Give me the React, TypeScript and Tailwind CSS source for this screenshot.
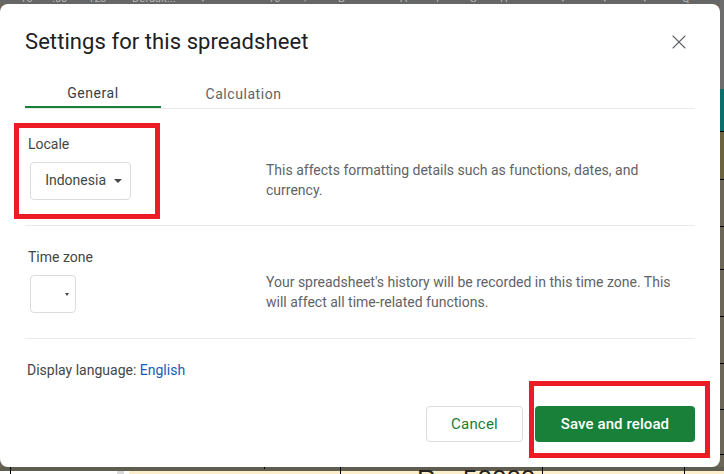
import { X } from "lucide-react";

const toolbarItems = [
  ["15", "w-[32px]"],
  [".00", "w-[36px]"],
  ["123", "w-[44px]"],
  ["Default...", "w-[68px]"],
  ["▾", "w-[37px]"],
  ["—", "w-[31px]"],
  ["10", "w-[34px]"],
  ["+", "w-[36px]"],
  ["B", "w-[62px]"],
  ["A", "w-[36px]"],
  ["I", "w-[34px]"],
  ["S", "w-[30px]"],
  ["H", "w-[60px]"],
  ["▾", "w-[42px]"],
  ["▾", "w-[40px]"],
  ["▾", "w-[40px]"],
  ["Q", "w-[20px]"],
];

function RightStrip() {
  return (
    <div className="absolute bottom-0 right-0 top-0 flex w-[4px] flex-col bg-[#6b6657]">
      <div className="h-[89px] bg-[#6d6d6d]" />
      <div className="h-[43px] border-b border-black bg-[#0d6f6c]" />
      <div className="h-[48px] border-b border-black bg-[#6b6240]" />
      <div className="h-[47px] border-b border-black" />
      <div className="h-[43px] border-b border-black" />
      <div className="h-[47px] border-b border-black" />
      <div className="h-[47px] border-b border-black" />
      <div className="h-[46px] border-b border-black" />
      <div className="h-[45px] border-b border-black" />
    </div>
  );
}

function BottomStrip() {
  return (
    <div className="absolute bottom-0 left-0 h-[7px] w-[724px] overflow-hidden bg-[#5f5c50]">
      <div className="absolute bottom-0 left-0 flex h-[3px] w-full">
        <div className="w-[117px] bg-white" />
        <div className="w-[7px] bg-[#d9d9d9]" />
        <div className="w-[5px] bg-white" />
        <div className="flex-1 bg-[#fdeecb]" />
      </div>
      <div className="absolute left-[10px] top-0 h-full w-px bg-black" />
      <div className="absolute left-[264px] top-0 h-[2px] w-px bg-black" />
      <div className="absolute left-[340px] top-0 h-full w-px bg-black" />
      <div className="absolute left-[542px] top-0 h-full w-px bg-black" />
      <div className="absolute left-[684px] top-0 h-full w-px bg-black" />
      <span className="absolute left-[417px] top-[-1px] font-['Liberation_Sans',sans-serif] text-[26px] leading-none text-[#222]">R</span>
      <span className="absolute left-[463px] top-[-1px] font-['Liberation_Sans',sans-serif] text-[26px] leading-none text-[#222]">50000</span>
    </div>
  );
}

function Toolbar() {
  return (
    <div className="flex h-[4px] items-end overflow-hidden bg-[#666666] pl-[20px] text-[11px] leading-none text-[#b5b5b5]">
      {toolbarItems.map(([text, width], i) => (
        <span key={i} className={`shrink-0 ${width}`}>{text}</span>
      ))}
    </div>
  );
}

function Divider() {
  return <div className="h-px bg-[#e8eaed]" />;
}

export default function App() {
  return (
    <div className="relative h-[474px] w-[724px] overflow-hidden bg-[#6b6657] font-['Roboto',sans-serif]">
      <RightStrip />
      <BottomStrip />
      <Toolbar />
      <div className="relative flex h-[463px] w-[720px] flex-col rounded-lg bg-white pl-[25px] pr-[25px]">
        <div className="flex h-[76px] shrink-0 items-center justify-between pr-[4px]">
          <h1 className="text-[22px] leading-7 tracking-[.07px] text-[#202124]">Settings for this spreadsheet</h1>
          <X className="h-6 w-6 text-[#5f6368]" strokeWidth={1.1} />
        </div>
        <div className="flex h-[29px] shrink-0 border-b border-[#e8eaed] text-[14px] tracking-[.55px]">
          <div className="flex w-[136px] items-center justify-center border-b-2 border-[#188038] text-[#3c4043]">General</div>
          <div className="flex w-[165px] items-center justify-center text-[#5f6368]">Calculation</div>
        </div>
        <div className="flex h-[116px] shrink-0">
          <div className="w-[241px] pl-[3px] pt-[25px]">
            <div className="text-[14px] leading-5 text-[#444746]">Locale</div>
            <div className="ml-[2px] mt-[8px] flex h-[38px] w-[101px] items-center justify-end rounded border border-[#dadce0] pr-[8px] text-[14px] leading-5 text-[#444746]">
              <span className="mb-[2px] mr-[8px]">Indonesia</span>
              <span className="h-0 w-0 border-x-4 border-t-4 border-x-transparent border-t-[#444746]" />
            </div>
          </div>
          <p className="w-[410px] pt-[52px] text-[14px] leading-[19.5px] text-[#5f6368]">This affects formatting details such as functions, dates, and currency.</p>
        </div>
        <Divider />
        <div className="flex h-[112px] shrink-0">
          <div className="w-[241px] pl-[3px] pt-[21px]">
            <div className="text-[14px] leading-5 text-[#444746]">Time zone</div>
            <div className="ml-[2px] mt-[8px] flex h-[38px] w-[46px] items-center justify-end rounded border border-[#dadce0] pr-[6px]">
              <span className="h-0 w-0 border-x-[2.5px] border-t-[3px] border-x-transparent border-t-[#444746]" />
            </div>
          </div>
          <p className="w-[410px] pt-[47px] text-[14px] leading-[19.5px] text-[#5f6368]">Your spreadsheet's history will be recorded in this time zone. This will affect all time-related functions.</p>
        </div>
        <Divider />
        <div className="mt-[21px] pl-[2px] text-[14px] leading-5 text-[#444746]">
          Display language: <span className="text-[#1a5bb8]">English</span>
        </div>
        <div className="mt-[26px] flex justify-end gap-3">
          <button className="h-[36px] w-[97px] rounded border border-[#dadce0] text-[15px] tracking-[.2px] text-[#188038]">Cancel</button>
          <button className="h-[36px] w-[160px] rounded bg-[#188038] text-[15px] font-medium tracking-[.1px] text-white">Save and reload</button>
        </div>
      </div>
      <div className="absolute left-[14px] top-[123px] h-[96px] w-[146px] border-[5px] border-[#ed1c24]" />
      <div className="absolute left-[529px] top-[381px] h-[77px] w-[181px] border-[5px] border-[#ed1c24]" />
    </div>
  );
}
